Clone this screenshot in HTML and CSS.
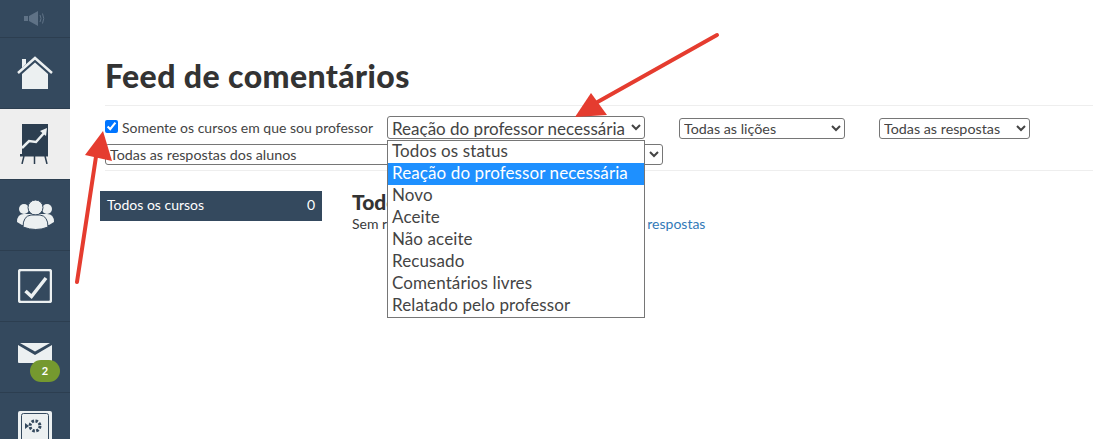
FILE: index.html
```html
<!DOCTYPE html>
<html lang="pt-BR">
<head>
  <meta charset="UTF-8">
  <meta name="viewport" content="width=device-width, initial-scale=1.0">
  <title>Feed de comentários</title>
  <link rel="stylesheet" href="styles.css">
</head>
<body>
  <!-- Barra lateral -->
  <nav class="sidebar">
    <div class="nav-item nav-top">
      <svg width="22" height="15" viewBox="0 0 22 15"><path d="M0 5h4v5H0zM5 5l9-5v15l-9-5z" fill="#5f7286"/><path d="M16 4q2 3.500 0 7M18.500 2.500q2.500 5 0 10" fill="none" stroke="#5f7286"/></svg>
    </div>
    <div class="nav-item">
      <svg width="36" height="34" viewBox="0 0 36 34"><path d="M5 3h4v5l-4 4z" fill="#ecf0f1"/><path d="M1 17L18 2l17 15" fill="none" stroke="#ecf0f1" stroke-width="2.500"/><path d="M5 18L18 6.500 31 18v15H5z" fill="#ecf0f1"/></svg>
    </div>
    <div class="nav-item active">
      <svg width="30" height="40" viewBox="0 0 30 40"><path d="M2 0h26v30H2z" fill="#2c3e50"/><path d="M2 24l7-7 7 1 8-9" fill="none" stroke="#ecf0f1" stroke-width="2.500"/><path d="M20 7l7-3-1 8z" fill="#ecf0f1"/><path d="M0 30h28v2.500H0z" fill="#2c3e50"/><path d="M4 32l-2 8M14.500 32v8M25 32l2 8" stroke="#2c3e50" stroke-width="1.500"/></svg>
    </div>
    <div class="nav-item">
      <svg width="37" height="30" viewBox="0 0 37 30"><circle cx="7" cy="9" r="5" fill="#ecf0f1"/><circle cx="30" cy="9" r="5" fill="#ecf0f1"/><path d="M0 22q0-8 7-8h23q7 0 7 8l-5 3H5z" fill="#ecf0f1"/><circle cx="18.500" cy="7.500" r="7.500" fill="#ecf0f1" stroke="#34495e"/><path d="M6 27q0-11 8-12h9q8 1 8 12-12 5-25 0z" fill="#ecf0f1" stroke="#34495e"/></svg>
    </div>
    <div class="nav-item">
      <svg width="34" height="34" viewBox="0 0 34 34"><rect x="1" y="1" width="32" height="32" rx="2" fill="none" stroke="#ecf0f1" stroke-width="2.500"/><path d="M7.500 22l6 5.500L28 9" fill="none" stroke="#ecf0f1" stroke-width="3.500"/></svg>
    </div>
    <div class="nav-item nav-mail">
      <svg width="34" height="21" viewBox="0 0 34 21"><path d="M0 2l17 10L34 2v18H1q-1 0-1-1z" fill="#ecf0f1"/><path d="M2 0h30L17 8.500z" fill="#ecf0f1"/></svg>
      <span class="badge">2</span>
    </div>
    <div class="nav-item nav-last">
      <svg width="34" height="28" viewBox="0 0 34 28"><rect width="34" height="34" rx="2" fill="#ecf0f1"/><rect x="3.500" y="2.500" width="27" height="30" rx="2" fill="none" stroke="#34495e"/><circle cx="17" cy="15" r="5" fill="none" stroke="#34495e" stroke-width="3" stroke-dasharray="2.500 1.400"/><path d="M7 12l4 3-4 3z" fill="#34495e"/></svg>
    </div>
  </nav>

  <!-- Conteúdo -->
  <main class="content">
    <h1>Feed de comentários</h1>

    <div class="filters">
      <label class="only-mine"><input type="checkbox" checked> Somente os cursos em que sou professor</label>
      <div class="status-wrap">
        <select class="sel sel-status">
          <option>Reação do professor necessária</option>
        </select>
        <ul class="status-list">
          <li>Todos os status</li>
          <li class="selected">Reação do professor necessária</li>
          <li>Novo</li>
          <li>Aceite</li>
          <li>Não aceite</li>
          <li>Recusado</li>
          <li>Comentários livres</li>
          <li>Relatado pelo professor</li>
        </ul>
      </div>
      <select class="sel sel-lessons"><option>Todas as lições</option></select>
      <select class="sel sel-answers"><option>Todas as respostas</option></select>
      <select class="sel sel-students"><option>Todas as respostas dos alunos</option></select>
    </div>

    <div class="columns">
      <div class="course-row"><span>Todos os cursos</span><span>0</span></div>
      <div class="feed">
        <h2>Todos os cursos</h2>
        <p>Sem respostas nesta visualização. <a href="#">Ver todas as respostas</a></p>
      </div>
    </div>
  </main>

  <!-- Setas de anotação -->
  <svg class="arrows" width="1093" height="439" viewBox="0 0 1093 439">
    <path d="M717 35L594 104" stroke="#e53c2f" stroke-width="4" stroke-linecap="round"/>
    <path d="M575 117L591 93 607 115z" fill="#e53c2f"/>
    <path d="M77 282L97 150" stroke="#e53c2f" stroke-width="4" stroke-linecap="round"/>
    <path d="M103 131L85 155 112 161z" fill="#e53c2f"/>
  </svg>
</body>
</html>
```

FILE: styles.css
```css
body {
  margin: 0;
  height: 439px;
  overflow: hidden;
  display: flex;
  background-color: #fff;
  color: #3b3b3b;
  font-family: 'Lato', sans-serif;
}

/* Barra lateral */
.sidebar {
  width: 70px;
  height: 439px;
  flex-shrink: 0;
  overflow: hidden;
  background-color: #34495e;
}

.nav-item {
  height: 70px;
  display: flex;
  justify-content: center;
  align-items: center;
  position: relative;
  border-bottom: 1px solid #2c3e50;
}

.nav-top {
  height: 37px;
}

.nav-item.active {
  background-color: #eeeeee;
}

.nav-mail svg {
  margin-bottom: 8px;
}

.nav-last {
  align-items: flex-start;
  padding-top: 18px;
  height: 46px;
  border-bottom: none;
}

.badge {
  position: absolute;
  left: 30px;
  top: 38px;
  width: 30px;
  height: 22px;
  border-radius: 11px;
  background-color: #75992f;
  color: #fff;
  font-size: 11px;
  font-weight: bold;
  line-height: 22px;
  text-align: center;
}

/* Conteúdo */
.content {
  flex: 1;
  padding: 58px 0 0 30px;
  position: relative;
}

h1 {
  margin: 0 0 0 5px;
  height: 47px;
  font-size: 32px;
  line-height: 35px;
  font-weight: 900;
  letter-spacing: 0.4px;
  color: #333;
}

.filters {
  margin-left: 5px;
  height: 66px;
  box-sizing: border-box;
  border-top: 1px solid #eeeeee;
  border-bottom: 1px solid #eeeeee;
  padding-top: 10px;
  display: flex;
  flex-wrap: wrap;
  align-items: flex-start;
  align-content: flex-start;
  column-gap: 34px;
  row-gap: 5px;
}

.only-mine {
  display: flex;
  align-items: center;
  gap: 4px;
  width: 248px;
  font-size: 14px;
  height: 23px;
  white-space: nowrap;
  color: #444;
}

.only-mine input {
  margin: 0 0 2px;
}

.sel {
  font-family: 'Lato', sans-serif;
  font-size: 14.3px;
  height: 21px;
  margin: 2px 0 0;
  padding: 0 0 2px;
  background-color: #fff;
  color: #444;
  border: 1px solid #767676;
  border-radius: 3px;
}

.status-wrap {
  position: relative;
  width: 258px;
  height: 23px;
}

.sel-status {
  width: 258px;
  height: 23px;
  margin: 0;
  padding-bottom: 1px;
  font-size: 17px;
}

.sel-lessons {
  width: 166px;
}

.sel-answers {
  width: 151px;
}

.sel-students {
  width: 558px;
  margin-top: 0;
}

.status-list {
  position: absolute;
  left: 0;
  top: 24px;
  width: 258px;
  box-sizing: border-box;
  margin: 0;
  padding: 0;
  list-style: none;
  background-color: #fff;
  border: 1px solid #767676;
  font-size: 17px;
  letter-spacing: 0.1px;
  line-height: 20px;
  color: #444;
  z-index: 2;
}

.status-list li {
  padding: 0 0 2px 4px;
  white-space: nowrap;
}

.status-list .selected {
  background-color: #1e90ff;
  color: #fff;
}

.columns {
  display: flex;
  margin-top: 20px;
}

.course-row {
  width: 222px;
  height: 30px;
  box-sizing: border-box;
  padding: 0 7px 4px;
  display: flex;
  justify-content: space-between;
  align-items: center;
  background-color: #34495e;
  color: #fff;
  font-size: 14px;
}

.feed {
  margin: -2px 0 0 30px;
}

.feed h2 {
  margin: 0;
  font-size: 21px;
  line-height: 26px;
  font-weight: 900;
  color: #333;
}

.feed p {
  margin: 0;
  font-size: 14px;
  line-height: 18px;
  white-space: nowrap;
}

.feed a {
  margin-left: 9px;
  color: #337ab7;
  text-decoration: none;
}

/* Setas */
.arrows {
  position: absolute;
  left: 0;
  top: 0;
  pointer-events: none;
}
```
